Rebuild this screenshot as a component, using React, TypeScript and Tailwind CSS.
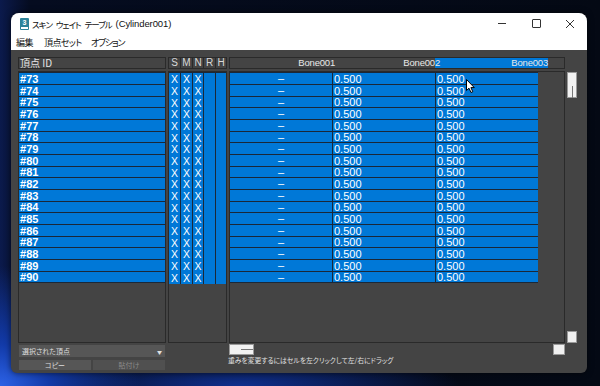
import React from "react";

const jp = "font-['Noto_Sans_CJK_JP',sans-serif] [font-feature-settings:'palt']";
const lat = "font-['Liberation_Sans',sans-serif]";

const ids = Array.from({ length: 18 }, (_, i) => 73 + i);
const rowH = (i: number) => (i % 3 === 2 ? "h-[11px]" : "h-[12px]");

export default function App() {
  return (
    <div className="relative w-[600px] h-[386px] overflow-hidden pt-[13px] pl-[11px] bg-[radial-gradient(ellipse_140px_120px_at_0%_100%,#2c62e6_0%,#123aa8_35%,transparent_100%),radial-gradient(ellipse_220px_40px_at_40%_100%,#0f2f8e_0%,transparent_100%),linear-gradient(90deg,#0b1a4c_0px,#050c20_30px,#040914_100%)]">
      <div className="w-[576px] h-[360px] rounded-t-[8px] rounded-b-[6px] overflow-hidden flex flex-col bg-[#444444] shadow-[0_0_6px_rgba(0,0,0,0.6)]">
        {/* title bar */}
        <div className="h-[21px] bg-white flex items-center shrink-0">
          <div className="ml-[9px] w-[9px] h-[12px] bg-[#2c8299] flex flex-col items-center justify-start rounded-[1px]">
            <span className={`${lat} text-[7px] leading-[9px] text-white font-bold`}>3</span>
            <div className="w-[7px] h-[2px] bg-white" />
          </div>
          <div className="ml-[3px] mt-[1px] flex items-center gap-[4px] whitespace-nowrap leading-none text-[#111]">
            <span className={`${jp} text-[8.5px] tracking-[-1px]`}>スキン</span>
            <span className={`${jp} text-[8.5px] tracking-[-1px]`}>ウェイト</span>
            <span className={`${jp} text-[8.5px] tracking-[-1px]`}>テーブル</span>
            <span className={`${lat} text-[9.5px] tracking-[-0.1px]`}>(Cylinder001)</span>
          </div>
          <div className="ml-auto flex h-full">
            <div className="w-[34px] h-full flex items-center justify-center">
              <div className="w-[8px] h-px bg-[#333]" />
            </div>
            <div className="w-[34px] h-full flex items-center justify-center">
              <div className="w-[9px] h-[9px] border border-[#333] rounded-[1px]" />
            </div>
            <div className="w-[34px] h-full flex items-center justify-center">
              <svg width="10" height="10" viewBox="0 0 10 10">
                <path d="M1 1L9 9M9 1L1 9" stroke="#333" strokeWidth="1" />
              </svg>
            </div>
          </div>
        </div>
        {/* menu bar */}
        <div className={`${jp} h-[16px] bg-white flex items-center text-[9px] tracking-[-0.6px] leading-none text-[#111] shrink-0 pl-[5px]`}>
          <span className="w-[28px]">編集</span>
          <span className="w-[47px]">頂点セット</span>
          <span className="tracking-[-1.3px]">オプション</span>
        </div>
        {/* content */}
        <div className="flex-1 pt-[7px] pl-[7px]">
          <div className="grid grid-cols-[148px_59px_336px_10px] gap-x-[2px]">
            {/* headers */}
            <div className={`${jp} h-[12px] border border-[#2a2a2a] text-[10px] leading-none text-[#e4e4e4] flex items-center pl-[1px]`}>
              頂点 ID
            </div>
            <div className={`${lat} h-[12px] border border-[#2a2a2a] grid grid-cols-[11px_12px_11px_12px_11px] text-[10px] leading-none text-[#d8d8d8]`}>
              {["S", "M", "N", "R", "H"].map((c, i) => (
                <div key={c} className={`flex items-center justify-center ${i > 0 ? "border-l border-[#2a2a2a]" : ""}`}>
                  {c}
                </div>
              ))}
            </div>
            <div className={`${lat} h-[12px] border border-[#2a2a2a] flex text-[9.5px] leading-none text-[#e8e8e8] tracking-[-0.2px]`}>
              <div className="w-[105px] flex items-center justify-end">Bone001</div>
              <div className="w-[105px] flex items-center justify-end relative z-10">Bone002</div>
              <div className="w-[113px] -ml-[5px] bg-[#0078d7] flex items-center justify-end">Bone003</div>
            </div>
            <div />

            {/* bodies */}
            <div className="h-[272px] mt-[2px] border border-[#2a2a2a]">
              {ids.map((n, i) => (
                <div
                  key={n}
                  className={`${rowH(i)} border-t border-[#1b2838] bg-[#0078d7] flex items-center ${
                    i === ids.length - 1 ? "border-b h-[12px]" : ""
                  }`}
                >
                  <span className={`${lat} pl-[1px] text-[11px] leading-none text-white font-bold mt-[1px]`}>#{n}</span>
                </div>
              ))}
            </div>
            <div className="h-[272px] mt-[2px] border border-[#2a2a2a]">
              {ids.map((n, i) => (
                <div
                  key={n}
                  className={`${rowH(i)} border-t border-[#1b2838] grid grid-cols-[11px_12px_11px_12px_11px] ${
                    i === ids.length - 1 ? "border-b h-[12px]" : ""
                  }`}
                >
                  {["X", "X", "X", "", ""].map((c, j) => (
                    <div
                      key={j}
                      className={`${lat} bg-[#0078d7] flex items-center justify-center text-[10.5px] leading-none text-white pt-[1px] ${
                        j > 0 ? "border-l border-[#1b2838]" : ""
                      }`}
                    >
                      {c}
                    </div>
                  ))}
                </div>
              ))}
            </div>
            <div className="h-[272px] mt-[2px] border border-[#2a2a2a]">
              {ids.map((n, i) => (
                <div
                  key={n}
                  className={`${rowH(i)} w-[308px] flex border-t border-[#1b2838] bg-[#0078d7] ${
                    i === ids.length - 1 ? "border-b h-[12px]" : ""
                  }`}
                >
                  <div className={`${lat} w-[102px] flex items-center justify-center text-[11px] leading-none text-white`}>–</div>
                  <div className={`${lat} w-[103px] border-l border-[#1b2838] flex items-center pl-[1px] pt-[1px] text-[11px] leading-none text-white`}>0.500</div>
                  <div className={`${lat} w-[103px] border-l border-[#1b2838] flex items-center pl-[1px] pt-[1px] text-[11px] leading-none text-white`}>0.500</div>
                </div>
              ))}
            </div>
            <div className="h-[272px] mt-[2px] flex flex-col justify-between">
              <div className="mt-[1px] h-[26px] bg-[#f2f2f2] border border-[#9a9a9a] flex justify-center">
                <div className="w-px h-[12px] bg-[#777] mt-[13px]" />
              </div>
              <div className="h-[12px] bg-[#f0f0f0] border border-[#9a9a9a]" />
            </div>

            {/* bottom area */}
            <div className="flex flex-col">
              <div className={`${jp} mt-[2px] h-[12px] ml-[1px] w-[146px] bg-[#565656] flex items-center px-[3px] text-[7px] leading-none text-[#dcdcdc]`}>
                <span>選択された頂点</span>
                <span className="ml-auto text-[5px] text-[#e0e0e0]">▼</span>
              </div>
              <div className="mt-[3px] ml-[1px] flex gap-[2px]">
                <div className={`${jp} w-[72px] h-[10px] bg-[#565656] flex items-center justify-center text-[7px] leading-none text-[#dcdcdc]`}>コピー</div>
                <div className={`${jp} w-[72px] h-[10px] bg-[#505050] flex items-center justify-center text-[7px] leading-none text-[#8a8a8a]`}>貼付け</div>
              </div>
            </div>
            <div />
            <div className="flex flex-col">
              <div className="mt-[1px] h-[11px] flex">
                <div className="w-[25px] h-[11px] bg-[#f2f2f2] border border-[#9a9a9a] flex items-center justify-end">
                  <div className="w-[12px] h-px bg-[#777]" />
                </div>
                <div className="ml-auto w-[12px] h-[11px] bg-[#f0f0f0] border border-[#9a9a9a]" />
              </div>
              <div className={`${jp} mt-[2px] -ml-[1px] text-[6.8px] leading-none text-[#e0e0e0]`}>
                重みを変更するにはセルを左クリックして左/右にドラッグ
              </div>
            </div>
            <div />
          </div>
        </div>
      </div>
      {/* mouse cursor */}
      <svg className="absolute left-[466px] top-[79px]" width="10" height="15" viewBox="0 0 10 15">
        <path d="M0.5 0.5 L0.5 11.5 L3 9.2 L5 13.5 L6.8 12.7 L4.9 8.6 L8.3 8.6 Z" fill="#fff" stroke="#000" strokeWidth="1" />
      </svg>
    </div>
  );
}
